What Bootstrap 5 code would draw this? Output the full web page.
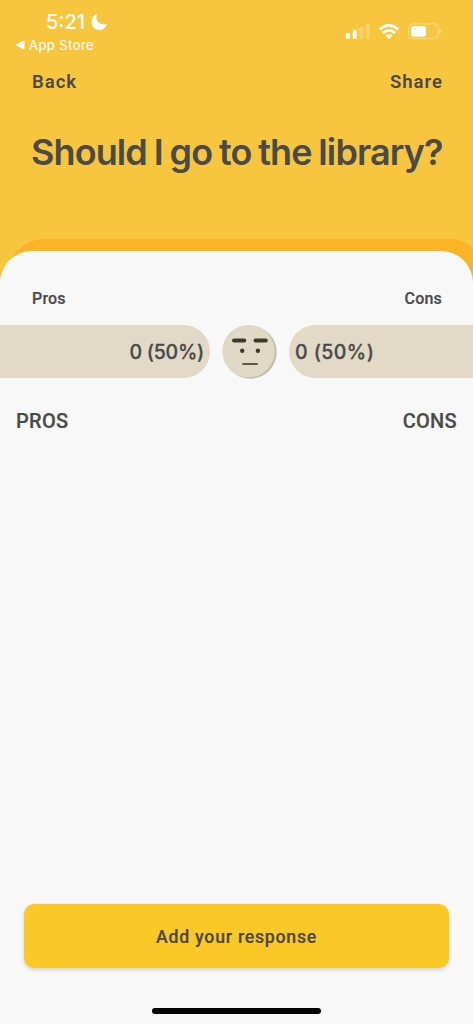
<!DOCTYPE html>
<html lang="en">
<head>
<meta charset="utf-8">
<meta name="viewport" content="width=device-width, initial-scale=1">
<title>Should I go to the library?</title>
<link href="https://cdn.jsdelivr.net/npm/bootstrap@5.3.0/dist/css/bootstrap.min.css" rel="stylesheet">
<style>
  body { font-family: Roboto, "Liberation Sans", sans-serif; color: #4b4a48; background: #f8f8f8; }
  .screen { height: 1024px; white-space: nowrap; }
  .hero { height: 239px; background: #f8c63e; padding: 0 31px 0 32px; }
  .status { height: 60px; margin: 0 -31px 0 -32px; padding: 12px 31px 0 15px; font-family: Inter, sans-serif; color: #fff; }
  .clock { font-size: 20px; line-height: 20px; font-weight: 500; margin-left: 31px; }
  .crumb { font-size: 13px; line-height: 16px; margin-top: 5px; letter-spacing: .45px; }
  .topnav { height: 42px; padding-top: 4px; font-size: 18.5px; font-weight: 600; }
  .topnav a { color: inherit; letter-spacing: 1px; margin-right: -1px; }
  .question { font-family: Inter, sans-serif; font-size: 36px; line-height: 44px; font-weight: 600; letter-spacing: -.9px; word-spacing: -1.4px; margin: 28px 0 0 -1px; }
  .backsheet { background: #f8c63e; }
  .backsheet-in { margin-left: 8px; margin-right: -8px; height: 60px; background: #fbb328; border-radius: 36px 30px 0 0; }
  .sheet { margin-top: -48px; position: relative; background: #f8f8f8; border-radius: 32px 32px 0 0; }
  .legend-row { padding: 36.5px 31px 0 32px; font-size: 16px; line-height: 21px; font-weight: 500; height: 74px; letter-spacing: .2px; -webkit-text-stroke: .2px; }
  .meter { height: 53px; font-family: Inter, sans-serif; font-size: 19.5px; font-weight: 500; gap: 12px; -webkit-text-stroke: .3px; }
  .meter-bar { background: #e2dac7; padding-top: 2px; }
  .bar-l { width: 210px; border-radius: 0 27px 27px 0; padding-right: 6px; letter-spacing: -.25px; }
  .bar-r { border-radius: 27px 0 0 27px; padding-left: 6px; letter-spacing: .45px; }
  .heads { padding: 30px 16px 0; font-size: 20px; line-height: 26px; font-weight: 500; -webkit-text-stroke: .2px; letter-spacing: .3px; }
  .cta { height: 64px; margin: 0 24px; padding-top: 8px; background: #fac827; color: #4b4a48; border: 0; border-radius: 10px; box-shadow: 0 2px 4px rgba(0,0,0,.15); font-size: 17.7px; font-weight: 500; letter-spacing: .75px; -webkit-text-stroke: .2px; }
  .home { width: 169px; height: 6px; margin: 40px 0 10px 152px; border-radius: 3px; background: #000; }
</style>
</head>
<body>
<div class="screen d-flex flex-column overflow-hidden">
  <header class="hero">
    <div class="status d-flex justify-content-between">
      <div>
        <div class="clock d-flex align-items-center">
          <span>5:21</span>
          <svg width="18" height="18" viewBox="0 0 18 18" style="margin-left:5px"><path d="M7 1C1 3 0 11 4 15c4 4 11 2 13-4C11 13 4 8 7 1Z" fill="#fff"/></svg>
        </div>
        <div class="crumb d-flex align-items-center">
          <svg width="14" height="10" viewBox="0 0 14 10"><path d="M1 5 9 1v8Z" fill="#fff" stroke="#fff" stroke-linejoin="round"/></svg>
          <span>App Store</span>
        </div>
      </div>
      <svg width="98" height="20" viewBox="344 22 98 20" style="margin-top:10px" fill="#fff">
        <rect x="346" y="33" width="4" height="6" rx="1"/><rect x="352.700" y="30" width="4" height="9" rx="1"/>
        <g opacity=".2"><rect x="359.300" y="27" width="4" height="12" rx="1"/><rect x="366" y="24" width="4" height="15" rx="1"/></g>
        <g fill="none" stroke="#fff" stroke-width="2.600"><path d="M379.800 29.400q9.200-8 18.400 0M383 32.900q6-5.200 12 0"/></g>
        <path d="M385.500 35.600q3.500-2.600 7 0L389 39Z"/>
        <rect x="408.700" y="23.900" width="29.500" height="14.800" rx="4.500" fill="none" stroke="#fff" stroke-opacity=".4"/>
        <rect x="411" y="26" width="15" height="10.700" rx="2.500"/><path d="M439.400 29q3 2.200 0 4.500Z" opacity=".5"/>
      </svg>
    </div>
    <nav class="topnav d-flex justify-content-between align-items-center">
      <a class="text-decoration-none" href="#">Back</a><a class="text-decoration-none" href="#">Share</a>
    </nav>
    <h1 class="question"><span>Should I go to the library?</span></h1>
  </header>
  <div class="backsheet"><div class="backsheet-in"></div></div>
  <main class="sheet flex-grow-1 d-flex flex-column">
    <div class="legend-row d-flex justify-content-between"><span>Pros</span><span>Cons</span></div>
    <div class="meter d-flex">
      <div class="meter-bar bar-l d-flex align-items-center justify-content-end"><span>0 (50%)</span></div>
      <svg width="55" height="55" viewBox="222 324.500 55 55" class="flex-shrink-0">
        <circle cx="250.200" cy="351.700" r="26.500" fill="#c3bdad"/><circle cx="248.500" cy="350.700" r="26.200" fill="#e0d9c5"/>
        <g fill="#3e3a2a"><rect x="232" y="338" width="14.300" height="4" rx="2"/><rect x="253.500" y="338" width="14.300" height="4" rx="2"/><circle cx="242.200" cy="350.300" r="2.200"/><circle cx="257.900" cy="350.300" r="2.200"/></g>
        <rect x="242.200" y="362.500" width="15.600" height="2" rx=".6" fill="#5e594a"/>
      </svg>
      <div class="meter-bar bar-r flex-grow-1 d-flex align-items-center"><span>0 (50%)</span></div>
    </div>
    <div class="heads d-flex justify-content-between"><span>PROS</span><span>CONS</span></div>
    <button class="cta btn mt-auto">Add your response</button>
    <div class="home flex-shrink-0"></div>
  </main>
</div>
<script src="https://cdn.jsdelivr.net/npm/bootstrap@5.3.0/dist/js/bootstrap.bundle.min.js"></script>
</body>
</html>
